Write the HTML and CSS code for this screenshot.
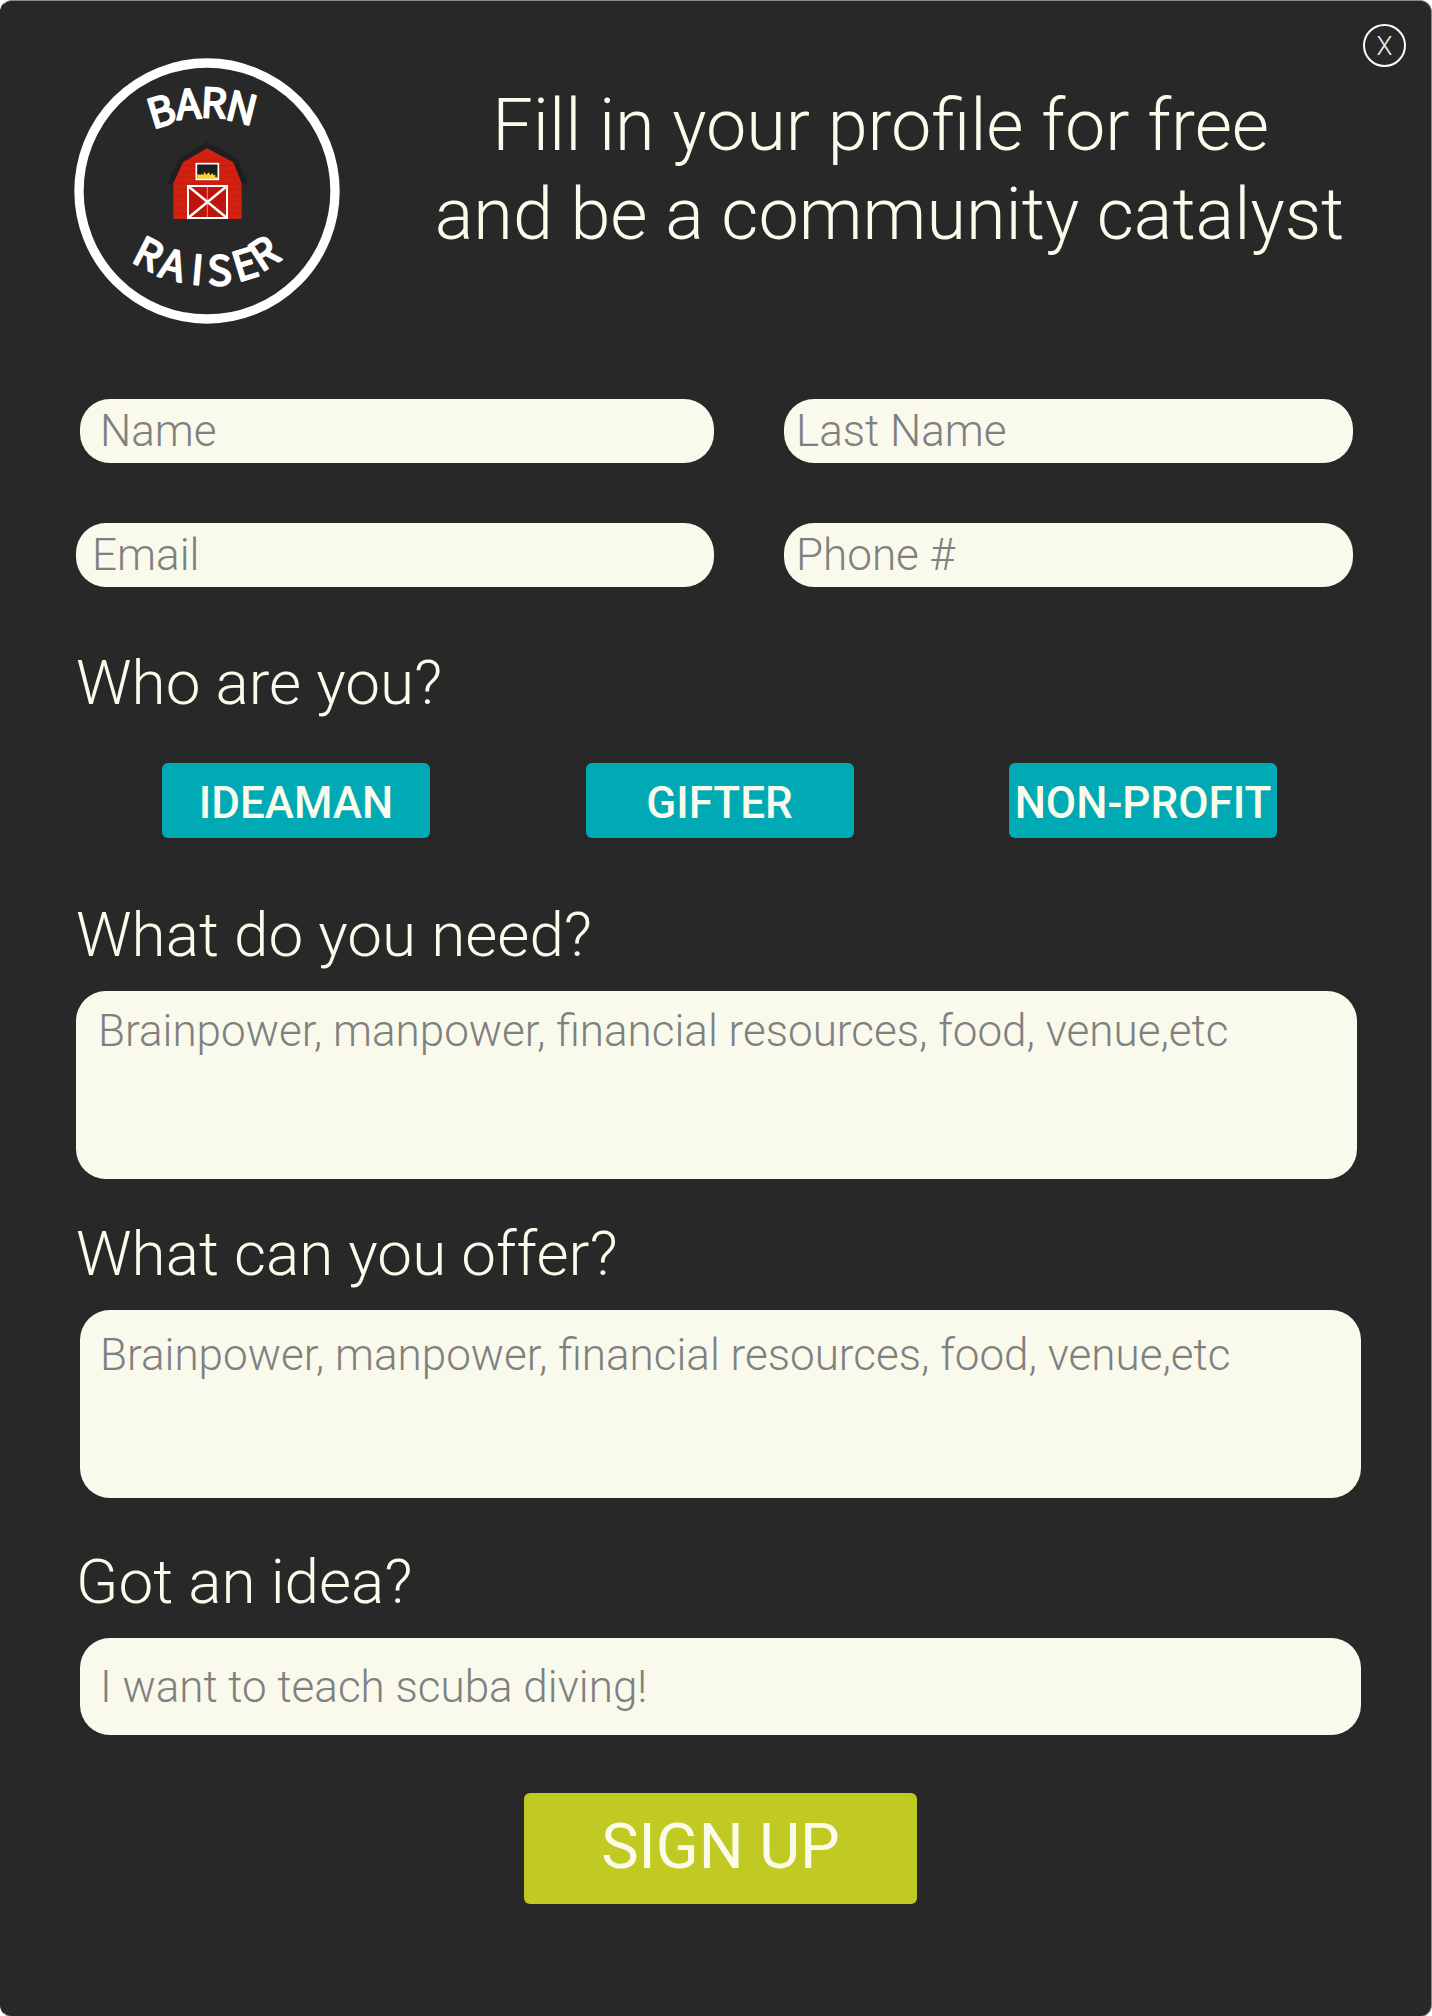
FILE: index.html
```html
<!DOCTYPE html>
<html lang="en">
<head>
<meta charset="utf-8">
<meta name="viewport" content="width=device-width, initial-scale=1">
<title>Barn Raiser – Sign up</title>
<link rel="stylesheet" href="styles.css">
</head>
<body>
<main class="panel">
  <button class="close" type="button" aria-label="Close">X</button>

  <header class="header">
    <svg class="logo" viewBox="42 54 798 798" role="img" aria-label="Barn Raiser">
      <circle cx="441" cy="453" r="384" fill="none" stroke="#fff" stroke-width="28"/>
      <path d="M441 306 533 357 563 430 546 437 441 360 336 437 322 430 358 357Z" fill="#1f1f1f"/>
      <path d="M441 325 520 367 545 430V537H340V430L369 367Z" fill="#d12110"/>
      <path d="M385 361H497M366 376H517M360 394H530M350 412H538M342 430H544M341 448H545M341 466H545M341 484H545M341 502H545M341 520H545" stroke="#c01c0e" stroke-width="2"/>
      <rect x="409" y="371" width="66" height="47" fill="#1f1f1f"/>
      <path d="M412 416V402L421 405 425 401 430 406 432 395 439 404 447 397 450 405 460 399 459 406 467 404 465 410 473 412V416Z" fill="#fbd91c"/>
      <rect x="409" y="371" width="66" height="47" fill="none" stroke="#fff" stroke-width="5"/>
      <rect x="384" y="438" width="117" height="96" fill="#bd150b"/>
      <path d="M442 438V534" stroke="#e88" stroke-width="3"/>
      <path d="M384 438 501 534M501 438 384 534" stroke="#fff" stroke-width="7"/>
      <rect x="384" y="438" width="117" height="96" fill="none" stroke="#fff" stroke-width="6"/>
      <text class="logo-text" x="278 351 421 492" y="268 239 231 236" rotate="-17 -4 3 14">BARN</text>
      <text class="logo-text" x="211 292 391 444 533 604" y="664 708 732 737 727 698" rotate="27 15 5 -2 -17 -33">RAISER</text>
    </svg>
    <h1 class="title">Fill in your profile for free&nbsp;<br>and be a community catalyst</h1>
  </header>

  <form class="form">
    <div class="fields">
      <input class="field name" type="text" placeholder="Name" aria-label="Name">
      <input class="field" type="text" placeholder="Last Name" aria-label="Last Name">
      <input class="field email" type="email" placeholder="Email" aria-label="Email">
      <input class="field" type="tel" placeholder="Phone #" aria-label="Phone #">
    </div>

    <h2 class="question">Who are you?</h2>
    <div class="roles">
      <button class="role" type="button">IDEAMAN</button>
      <button class="role" type="button">GIFTER</button>
      <button class="role" type="button">NON-PROFIT</button>
    </div>

    <label class="question" for="need">What do you need?</label>
    <textarea class="area" id="need" placeholder="Brainpower, manpower, financial resources, food, venue,etc"></textarea>

    <label class="question" for="offer">What can you offer?</label>
    <textarea class="area indented roomy" id="offer" placeholder="Brainpower, manpower, financial resources, food, venue,etc"></textarea>

    <label class="question" for="idea">Got an idea?</label>
    <input class="idea indented" id="idea" type="text" placeholder="I want to teach scuba diving!">

    <button class="submit indented" type="submit">SIGN UP</button>
  </form>
</main>
</body>
</html>
```
FILE: styles.css
```css
* {
  box-sizing: border-box;
}

body {
  margin: 0;
  background: #fff;
  color: #fbfbec;
  font-family: Roboto, "Liberation Sans", sans-serif;
  font-weight: 300;
}

.panel {
  position: relative;
  padding: 57px 70px 112px 75px;
  background: #282828;
  border: 1px solid #8a8a8a;
  border-left-color: #282828;
  border-radius: 12px;
}

.close {
  position: absolute;
  top: 23px;
  right: 25px;
  width: 43px;
  height: 43px;
  padding: 0;
  border: 2px solid #fff;
  border-radius: 50%;
  background: none;
  color: #e9f3ee;
  font: 300 26px/40px Roboto, "Liberation Sans", sans-serif;
}

.header {
  display: flex;
  align-items: flex-start;
  margin-bottom: 75px;
}

.logo {
  flex: none;
  width: 266px;
  height: 266px;
  margin-left: -2px;
}

.logo-text {
  fill: #fff;
  stroke: #fff;
  stroke-width: 6px;
  stroke-linejoin: round;
  font-family: "Noto Sans CJK SC", sans-serif;
  font-size: 122px;
  font-weight: 400;
}

.title {
  flex: 1;
  margin: 23px -78px 0 0;
  font-size: 72px;
  line-height: 89px;
  font-weight: 300;
  text-align: center;
}

.form {
  display: flex;
  flex-direction: column;
}

.fields {
  display: grid;
  grid-template-columns: 638fr 569fr;
  gap: 60px 70px;
  margin-right: 8px;
}

.field,
.area,
.idea {
  min-width: 0;
  border: 0;
  border-radius: 30px;
  background: #fafaec;
  color: #282828;
  font: 300 44px/50px Roboto, "Liberation Sans", sans-serif;
}

::placeholder {
  color: #808080;
  opacity: 1;
}

.field {
  width: 100%;
  height: 64px;
  padding: 0 12px;
}

.name {
  width: auto;
  margin-left: 4px;
  padding-left: 20px;
}

.email {
  padding-left: 16px;
}

.question {
  margin: 40px 0 21px;
  font-size: 62px;
  line-height: 70px;
  font-weight: 300;
}

h2.question {
  margin-top: 61px;
}

.roles {
  display: flex;
  justify-content: space-between;
  margin: 24px 84px 22px 86px;
}

.role {
  width: 268px;
  height: 75px;
  padding: 4px 0 0;
  border: 0;
  border-radius: 6px;
  background: #00aab5;
  color: #fbfbec;
  font: 500 44px/50px Roboto, "Liberation Sans", sans-serif;
}

.area {
  height: 188px;
  margin-right: 4px;
  padding: 15px 22px;
  resize: none;
}

.idea {
  height: 97px;
  padding: 0 20px;
}

.indented {
  margin-right: 0;
  margin-left: 4px;
}

.roomy {
  margin-bottom: 9px;
  padding: 20px;
}

.submit {
  align-self: center;
  width: 393px;
  height: 111px;
  margin-top: 58px;
  padding: 0 0 4px;
  border: 0;
  border-radius: 6px;
  background: #c1ca22;
  color: #fbfbec;
  font: 400 63px/70px Roboto, "Liberation Sans", sans-serif;
}
```
